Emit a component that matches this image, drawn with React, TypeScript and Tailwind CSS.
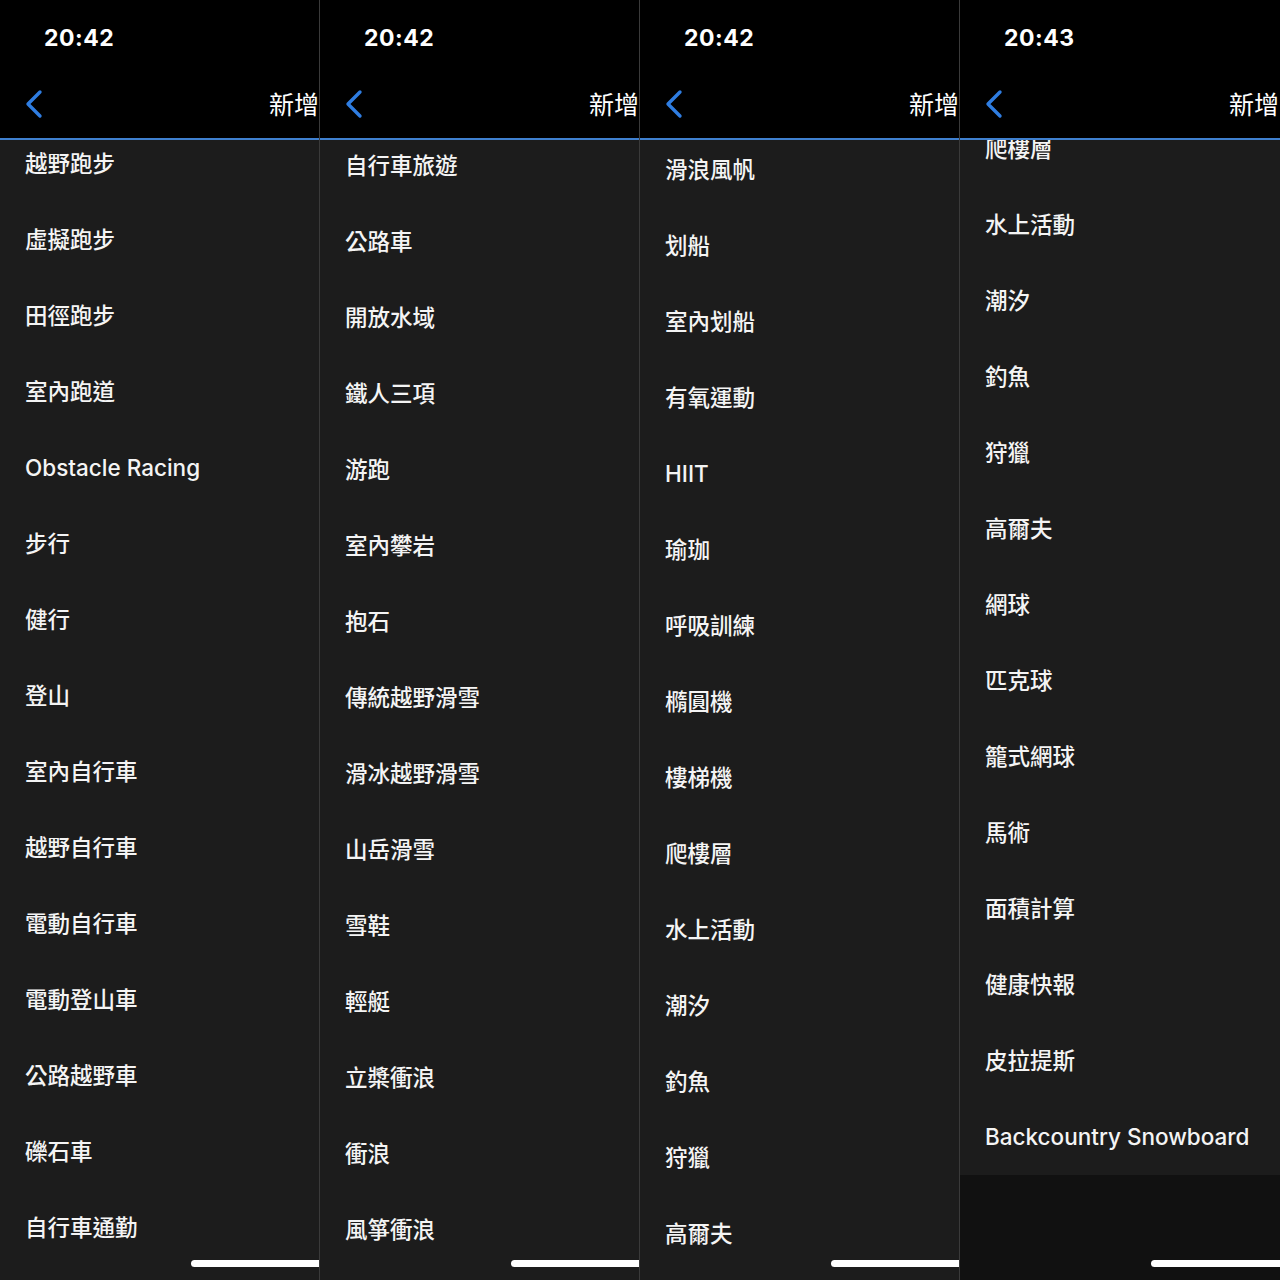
import React from 'react';

type Screen = {
    time: string;
    offset: string; // scroll position of the list
    items: string[];
    tail?: boolean; // list ends before the screen bottom
};

const screens: Screen[] = [
    {
        time: '20:42',
        offset: 'mt-[-14px]',
        items: ['越野跑步', '虛擬跑步', '田徑跑步', '室內跑道', 'Obstacle Racing', '步行', '健行', '登山', '室內自行車', '越野自行車', '電動自行車', '電動登山車', '公路越野車', '礫石車', '自行車通勤'],
    },
    {
        time: '20:42',
        offset: 'mt-[-12px]',
        items: ['自行車旅遊', '公路車', '開放水域', '鐵人三項', '游跑', '室內攀岩', '抱石', '傳統越野滑雪', '滑冰越野滑雪', '山岳滑雪', '雪鞋', '輕艇', '立槳衝浪', '衝浪', '風箏衝浪'],
    },
    {
        time: '20:42',
        offset: 'mt-[-8px]',
        items: ['滑浪風帆', '划船', '室內划船', '有氧運動', 'HIIT', '瑜珈', '呼吸訓練', '橢圓機', '樓梯機', '爬樓層', '水上活動', '潮汐', '釣魚', '狩獵', '高爾夫'],
    },
    {
        time: '20:43',
        offset: 'mt-[-29px]',
        items: ['爬樓層', '水上活動', '潮汐', '釣魚', '狩獵', '高爾夫', '網球', '匹克球', '籠式網球', '馬術', '面積計算', '健康快報', '皮拉提斯', 'Backcountry Snowboard'],
        tail: true,
    },
];

const font = { fontFamily: 'Inter, "Noto Sans CJK TC", sans-serif' };

const BackChevron = () => (
    <svg width="20" height="30" viewBox="0 0 20 30" fill="none">
        <path d="M16 3 L4 15 L16 27" stroke="#2f7de1" strokeWidth="3.4" strokeLinecap="round" strokeLinejoin="round" />
    </svg>
);

const Phone: React.FC<{ screen: Screen; last: boolean }> = ({ screen, last }) => (
    <div className={`relative h-[1280px] overflow-hidden flex flex-col bg-[#1c1c1c] ${last ? '' : 'border-r border-[#3a3a3a]'}`}>
        <div className="bg-black">
            <div className="h-[76px] flex items-center pl-[44px]">
                <span className="text-white text-[23px] font-bold tracking-[0.5px]" style={{ fontFamily: 'Inter, "Liberation Sans", sans-serif' }}>
                    {screen.time}
                </span>
            </div>
            <div className="h-[62px] flex items-center pb-[6px] pl-[24px] whitespace-nowrap">
                <BackChevron />
                <span className="ml-[225px] mt-[4px] text-white text-[25px]" style={font}>新增</span>
            </div>
        </div>
        <div className="h-[2px] bg-[#3f80cf]" />
        <div className="flex-1 overflow-hidden flex flex-col">
            <div className={`${screen.offset} flex flex-col`}>
                {screen.items.map((item, i) => (
                    <div key={i} className="h-[76px] shrink-0 flex items-center pl-[25px]">
                        <span className="text-[#f4f4f4] text-[22.5px] font-medium whitespace-nowrap" style={font}>{item}</span>
                    </div>
                ))}
            </div>
            {screen.tail && <div className="flex-1 bg-[#111111]" />}
        </div>
        {/* home indicator, cut by the screen's right edge */}
        <div className="absolute left-[191px] bottom-[13px] w-[140px] h-[7px] rounded-full bg-white" />
    </div>
);

export default function App() {
    return (
        <div className="w-[1280px] h-[1280px] grid grid-cols-4 bg-black overflow-hidden">
            {screens.map((s, i) => (
                <Phone key={i} screen={s} last={i === screens.length - 1} />
            ))}
        </div>
    );
}
